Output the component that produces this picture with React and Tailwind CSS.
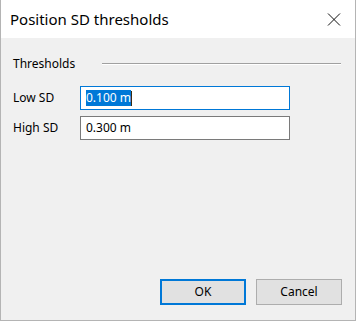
import React from "react";

const font = { fontFamily: '"Noto Sans", "Open Sans", Arial, sans-serif' };

function Field({ label, value, focused }) {
  return (
    <div className="flex items-center h-[24px]">
      <div className="w-[67px] text-[12px] leading-[16px] text-black">{label}</div>
      <div
        className={`w-[210px] h-[24px] bg-white border flex items-center pl-[5px] text-[12px] leading-[16px] text-black ${
          focused ? "border-[#0078d7]" : "border-[#7a7a7a]"
        }`}
      >
        {focused ? (
          <>
            <span className="bg-[#0078d7] text-white h-[16px] flex items-center">{value}</span>
            <span className="w-[1px] h-[15px] bg-[#3a2a10]" />
          </>
        ) : (
          <span>{value}</span>
        )}
      </div>
    </div>
  );
}

export default function App() {
  return (
    <div style={font} className="w-[356px] h-[321px] flex flex-col border-x border-b border-[#b4b4b4] bg-[#f0f0f0]">
      <div className="h-[38px] bg-white flex items-center justify-between pl-[9px] pr-[14px]">
        <span className="text-[15px] text-black">Position SD thresholds</span>
        <svg width="14" height="13" viewBox="0 0 14 13" className="mt-[1px]">
          <path d="M1 0.5 L13 12.5 M13 0.5 L1 12.5" stroke="#111" strokeWidth="1" fill="none" />
        </svg>
      </div>

      <div className="flex-1 flex flex-col pl-[12px] pr-[14px] pt-[18px] pb-[15px]">
        <div className="flex items-center h-[16px]">
          <span className="w-[89px] text-[12px] leading-[16px] text-black">Thresholds</span>
          <div className="flex-1 flex flex-col">
            <div className="h-[1px] bg-[#a0a0a0]" />
            <div className="h-[1px] bg-white" />
          </div>
        </div>

        <div className="flex flex-col gap-[6px] mt-[14px]">
          <Field label="Low SD" value="0.100 m" focused />
          <Field label="High SD" value="0.300 m" />
        </div>

        <div className="flex-1" />

        <div className="flex justify-end gap-[10px] pr-[-1px]">
          <button className="w-[86px] h-[26px] bg-[#e1e1e1] border-2 border-[#0078d7] text-[12px] text-black">OK</button>
          <button className="w-[86px] h-[26px] bg-[#e1e1e1] border border-[#adadad] text-[12px] text-black mr-[-1px]">Cancel</button>
        </div>
      </div>
    </div>
  );
}
